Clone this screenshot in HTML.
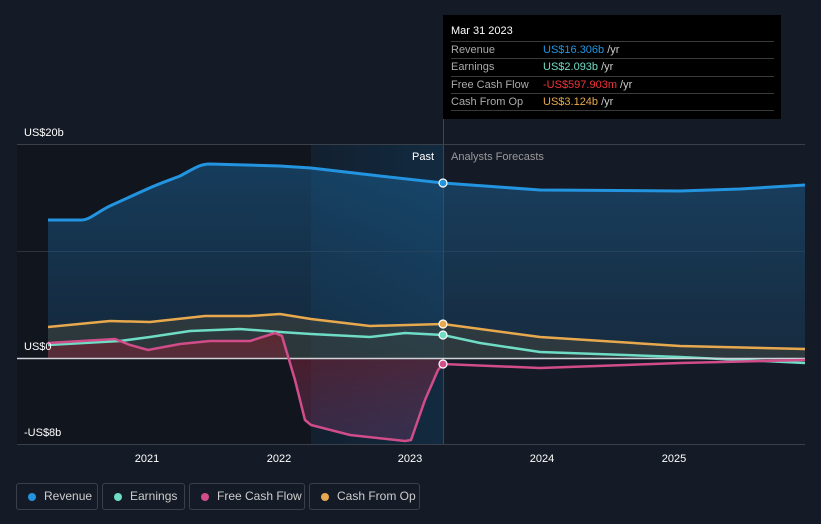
<!DOCTYPE html>
<html><head><meta charset="utf-8"><style>
body{margin:0;background:#151b26;font-family:"Liberation Sans",sans-serif;}
.w{position:relative;width:821px;height:524px;overflow:hidden;background:#151b26}
.tt{position:absolute;left:443px;top:15px;width:338px;height:104px;background:#000;color:#fff;font-size:11px}
.tt .h{position:absolute;left:8px;top:10px;font-size:11px}
.row{position:absolute;left:8px;width:323px;border-top:1px solid #3a3a3a;height:17px;line-height:17px}
.row span.l{color:#aaa;position:absolute;left:0}
.row span.v{position:absolute;left:92px;color:#ccc}
.lg{position:absolute;top:483px;height:27px;border:1px solid #3b404a;border-radius:3px;color:#ccc;font-size:12px;line-height:25px;box-sizing:border-box}
.lg i{position:absolute;left:11px;top:9px;width:8px;height:8px;border-radius:50%}
.lg b{font-weight:normal;position:absolute;left:27px}
</style></head><body><div class="w">
<svg width="821" height="524" style="position:absolute;left:0;top:0">
<defs>
<linearGradient id="rg" x1="0" y1="0" x2="0" y2="1"><stop offset="0" stop-color="#1a5d8f" stop-opacity=".55"/><stop offset="1" stop-color="#1a4a70" stop-opacity=".35"/></linearGradient>
<linearGradient id="fg" x1="0" y1="0" x2="0" y2="1"><stop offset="0" stop-color="#7a1f2a" stop-opacity=".6"/><stop offset="1" stop-color="#6a3a6a" stop-opacity=".4"/></linearGradient>
<linearGradient id="hg" x1="0" y1="0" x2="1" y2="0"><stop offset="0" stop-color="#133049" stop-opacity=".4"/><stop offset="1" stop-color="#133049" stop-opacity=".8"/></linearGradient>
</defs>
<rect x="17" y="145" width="426" height="299" fill="#11151e"/>
<rect x="311" y="145" width="132" height="299" fill="url(#hg)"/>
<line x1="17" y1="144.5" x2="805" y2="144.5" stroke="#3a404a"/>
<line x1="17" y1="251.5" x2="805" y2="251.5" stroke="#2c3440"/>
<line x1="17" y1="444.5" x2="805" y2="444.5" stroke="#3a404a"/>
<line x1="443.5" y1="15" x2="443.5" y2="444" stroke="#2a4a66"/>
<path d="M48 220 L82 220 C90 220 100 210 112 205 L145 190 C160 183 170 180 180 176 C195 168 200 164 210 164 L280 166 L311 168 L380 176 L443 183 L540 190 L680 191 L740 189 L805 185 L805 358 L48 358Z" fill="url(#rg)"/>
<path d="M48 327 L110 321 L150 322 L205 316 L250 316 L280 314 L311 319 L370 326 L443 324 L540 337 L680 346 L805 349 L805 358 L48 358Z" fill="#4a4a3a" opacity=".45"/>
<path d="M48 343 L115 339 L130 345 L148 350 L180 344 L210 341 L250 341 L275 333 L282 336 L295 380 L305 420 L311 425 L350 435 L405 441 L411 440 L425 400 L438 370 L443 364 L443 358 L48 358Z" fill="url(#fg)"/>
<path d="M48 220 L82 220 C90 220 100 210 112 205 L145 190 C160 183 170 180 180 176 C195 168 200 164 210 164 L280 166 L311 168 L380 176 L443 183 L540 190 L680 191 L740 189 L805 185" fill="none" stroke="#2394df" stroke-width="3"/>
<path d="M48 327 L110 321 L150 322 L205 316 L250 316 L280 314 L311 319 L370 326 L443 324 L540 337 L680 346 L805 349" fill="none" stroke="#e8a94e" stroke-width="2.5"/>
<path d="M48 345 L120 341 L150 337 L190 331 L240 329 L280 332 L311 334 L370 337 L405 333 L443 335 L480 343 L540 352 L680 357 L805 363" fill="none" stroke="#6fdcc6" stroke-width="2.5"/>
<line x1="17" y1="358.5" x2="805" y2="358.5" stroke="#cfd3d8" stroke-width="1.5"/>
<path d="M48 343 L115 339 L130 345 L148 350 L180 344 L210 341 L250 341 L275 333 L282 336 L295 380 L305 420 L311 425 L350 435 L405 441 L411 440 L425 400 L438 370 L443 364 L540 368 L680 363 L805 360" fill="none" stroke="#d04d8a" stroke-width="2.5"/>
<g stroke="#fff" stroke-width="1.2"><circle cx="443" cy="183" r="4" fill="#2394df"/><circle cx="443" cy="324" r="4" fill="#e8a94e"/><circle cx="443" cy="335" r="4" fill="#6fdcc6"/><circle cx="443" cy="364" r="4" fill="#d04d8a"/></g>
<g font-size="11" fill="#fff"><text x="24" y="136">US$20b</text><text x="24" y="350">US$0</text><text x="24" y="436">-US$8b</text>
<text x="412" y="160">Past</text><text x="451" y="160" fill="#999">Analysts Forecasts</text>
<text x="147" y="462" text-anchor="middle">2021</text><text x="279" y="462" text-anchor="middle">2022</text><text x="410" y="462" text-anchor="middle">2023</text><text x="542" y="462" text-anchor="middle">2024</text><text x="674" y="462" text-anchor="middle">2025</text></g>
</svg>
<div class="tt"><div class="h">Mar 31 2023</div>
<div class="row" style="top:26px"><span class="l">Revenue</span><span class="v"><span style="color:#2394df">US$16.306b</span> /yr</span></div>
<div class="row" style="top:43px"><span class="l">Earnings</span><span class="v"><span style="color:#6fdcc6">US$2.093b</span> /yr</span></div>
<div class="row" style="top:61px"><span class="l">Free Cash Flow</span><span class="v"><span style="color:#f0343c">-US$597.903m</span> /yr</span></div>
<div class="row" style="top:78px"><span class="l">Cash From Op</span><span class="v"><span style="color:#e8a94e">US$3.124b</span> /yr</span></div>
<div class="row" style="top:95px;height:0"></div>
</div>
<div class="lg" style="left:16px;width:82px"><i style="background:#2394df"></i><b>Revenue</b></div>
<div class="lg" style="left:102px;width:83px"><i style="background:#6fdcc6"></i><b>Earnings</b></div>
<div class="lg" style="left:189px;width:116px"><i style="background:#d04d8a"></i><b>Free Cash Flow</b></div>
<div class="lg" style="left:309px;width:111px"><i style="background:#e8a94e"></i><b>Cash From Op</b></div>
</div></body></html>
